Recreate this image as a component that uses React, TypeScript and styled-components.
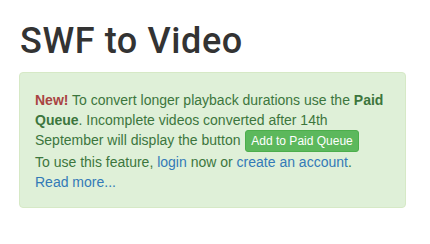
import React from "react";
import styled, { createGlobalStyle } from "styled-components";

const Global = createGlobalStyle`
  html, body { margin: 0; padding: 0; background: #fff; }
  body {
    font-family: "Liberation Sans", Arial, Helvetica, sans-serif;
    font-size: 14px;
    line-height: 20px;
    color: #333;
  }
`;

const Page = styled.div`
  padding: 2px 19px 0 19px;
`;

const Title = styled.h1`
  font-family: Roboto, "Liberation Sans", Arial, sans-serif;
  font-size: 36px;
  line-height: 1.1;
  font-weight: 500;
  letter-spacing: 0.6px;
  margin: 20px 0 10px 1px;
  color: #333;
`;

const Alert = styled.div`
  width: 387px;
  box-sizing: border-box;
  padding: 17px 15px 15px 15px;
  background: #dff0d8;
  border: 1px solid #d6e9c6;
  border-radius: 4px;
  color: #3c763d;
`;

const New = styled.strong`
  color: #a94442;
`;

const Link = styled.a`
  color: #337ab7;
  text-decoration: none;
`;

const Button = styled.button`
  display: inline-block;
  font-family: inherit;
  font-size: 12px;
  line-height: 1.5;
  padding: 1px 5px;
  margin-left: 1px;
  border-radius: 3px;
  color: #fff;
  background: #5cb85c;
  border: 1px solid #4cae4c;
  vertical-align: middle;
  cursor: pointer;
`;

export default function App() {
  return (
    <>
      <Global />
      <Page>
        <Title>SWF to Video</Title>
        <Alert>
          <New>New!</New> To convert longer playback durations use the{" "}
          <strong>Paid Queue</strong>. Incomplete videos converted after 14th
          September will display the button <Button>Add to Paid Queue</Button>
          <br />
          To use this feature, <Link href="#">login</Link> now or{" "}
          <Link href="#">create an account</Link>.
          <br />
          <Link href="#">Read more...</Link>
        </Alert>
      </Page>
    </>
  );
}
